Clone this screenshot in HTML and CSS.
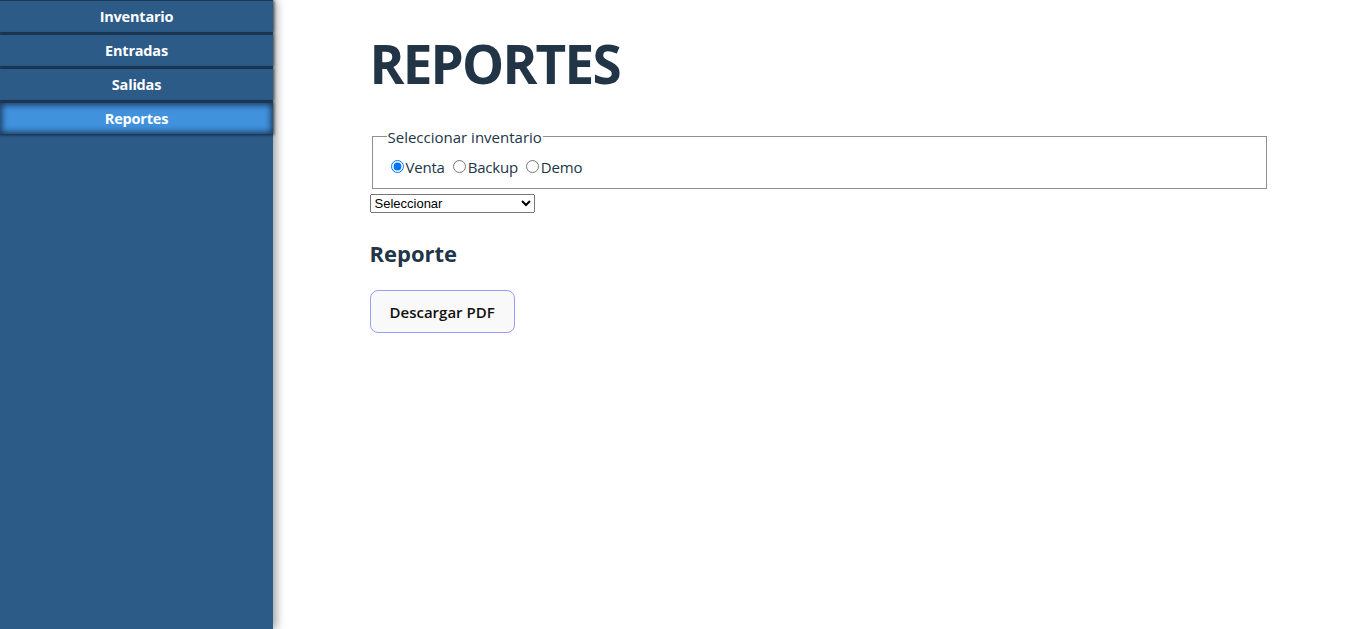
FILE: index.html
```html
<!DOCTYPE html>
<html lang="es">
<head>
<meta charset="utf-8">
<title>Reportes</title>
<link rel="stylesheet" href="styles.css">
</head>
<body>
<div class="layout">
  <aside class="sidebar">
    <nav class="nav">
      <a class="nav-item" href="#">Inventario</a>
      <a class="nav-item" href="#">Entradas</a>
      <a class="nav-item" href="#">Salidas</a>
      <a class="nav-item active" href="#">Reportes</a>
    </nav>
  </aside>
  <main class="main">
    <div class="content">
      <h1 class="title">REPORTES</h1>
      <fieldset class="choice">
        <legend>Seleccionar inventario</legend>
        <label class="opt"><input type="radio" name="inv" checked>Venta</label>
        <label class="opt"><input type="radio" name="inv">Backup</label>
        <label class="opt"><input type="radio" name="inv">Demo</label>
      </fieldset>
      <select class="picker">
        <option>Seleccionar</option>
      </select>
      <h2 class="subtitle">Reporte</h2>
      <button class="btn" type="button">Descargar PDF</button>
    </div>
  </main>
</div>
</body>
</html>
```

FILE: styles.css
```css
html, body {
  margin: 0;
  padding: 0;
  height: 100%;
}
body {
  font-family: "Open Sans", "Noto Sans", sans-serif;
  color: #213547;
  background: #ffffff;
}
.layout {
  display: flex;
  height: 100%;
}
.sidebar {
  width: 273px;
  flex: none;
  background: #2d5b88;
  box-shadow: 3px 0 9px rgba(0, 0, 0, 0.4);
  position: relative;
  z-index: 1;
}
.nav {
  display: flex;
  flex-direction: column;
  gap: 3px;
  padding-top: 1px;
}
.nav-item {
  display: flex;
  align-items: center;
  justify-content: center;
  height: 31px;
  color: #ffffff;
  text-decoration: none;
  font-weight: 700;
  font-size: 14.5px;
  letter-spacing: -0.2px;
  background: #2d5b88;
  box-shadow: 0 0 3px 1px rgba(10, 20, 35, 0.75);
}
.nav-item.active {
  background: #4192dd;
  box-shadow: inset 0 0 6px 2px rgba(20, 40, 70, 0.85), 0 0 3px 1px rgba(10, 20, 35, 0.75);
}
.main {
  flex: 1;
}
.content {
  width: 899px;
  margin: 0 auto;
}
.title {
  margin: 32px 0 31px;
  font-size: 53px;
  font-weight: 700;
  line-height: 1.2;
  letter-spacing: -1.8px;
}
.choice {
  margin: 0 2px;
  padding: 10px 12px 11px 14px;
  border: 1px solid #8f8f8f;
  font-size: 15px;
  line-height: 20px;
}
.choice legend {
  padding: 0 1px;
  font-size: 15px;
}
.opt {
  display: inline-flex;
  align-items: center;
  margin-right: 0;
  letter-spacing: -0.2px;
}
.opt input {
  margin: 0 2px 0 4px;
  width: 13px;
  height: 13px;
}
.picker {
  display: block;
  margin-top: 5px;
  width: 165px;
  height: 19px;
  font-family: "Liberation Sans", Arial, sans-serif;
  font-size: 13px;
}
.subtitle {
  margin: 27px 0 24px;
  font-size: 22px;
  font-weight: 700;
  line-height: 1.2;
}
.btn {
  font-family: inherit;
  font-size: 15px;
  font-weight: 600;
  color: #111111;
  background: #f9f9f9;
  border: 1px solid #9a9cff;
  border-radius: 8px;
  padding: 0 19px;
  height: 43px;
  cursor: pointer;
}
```
